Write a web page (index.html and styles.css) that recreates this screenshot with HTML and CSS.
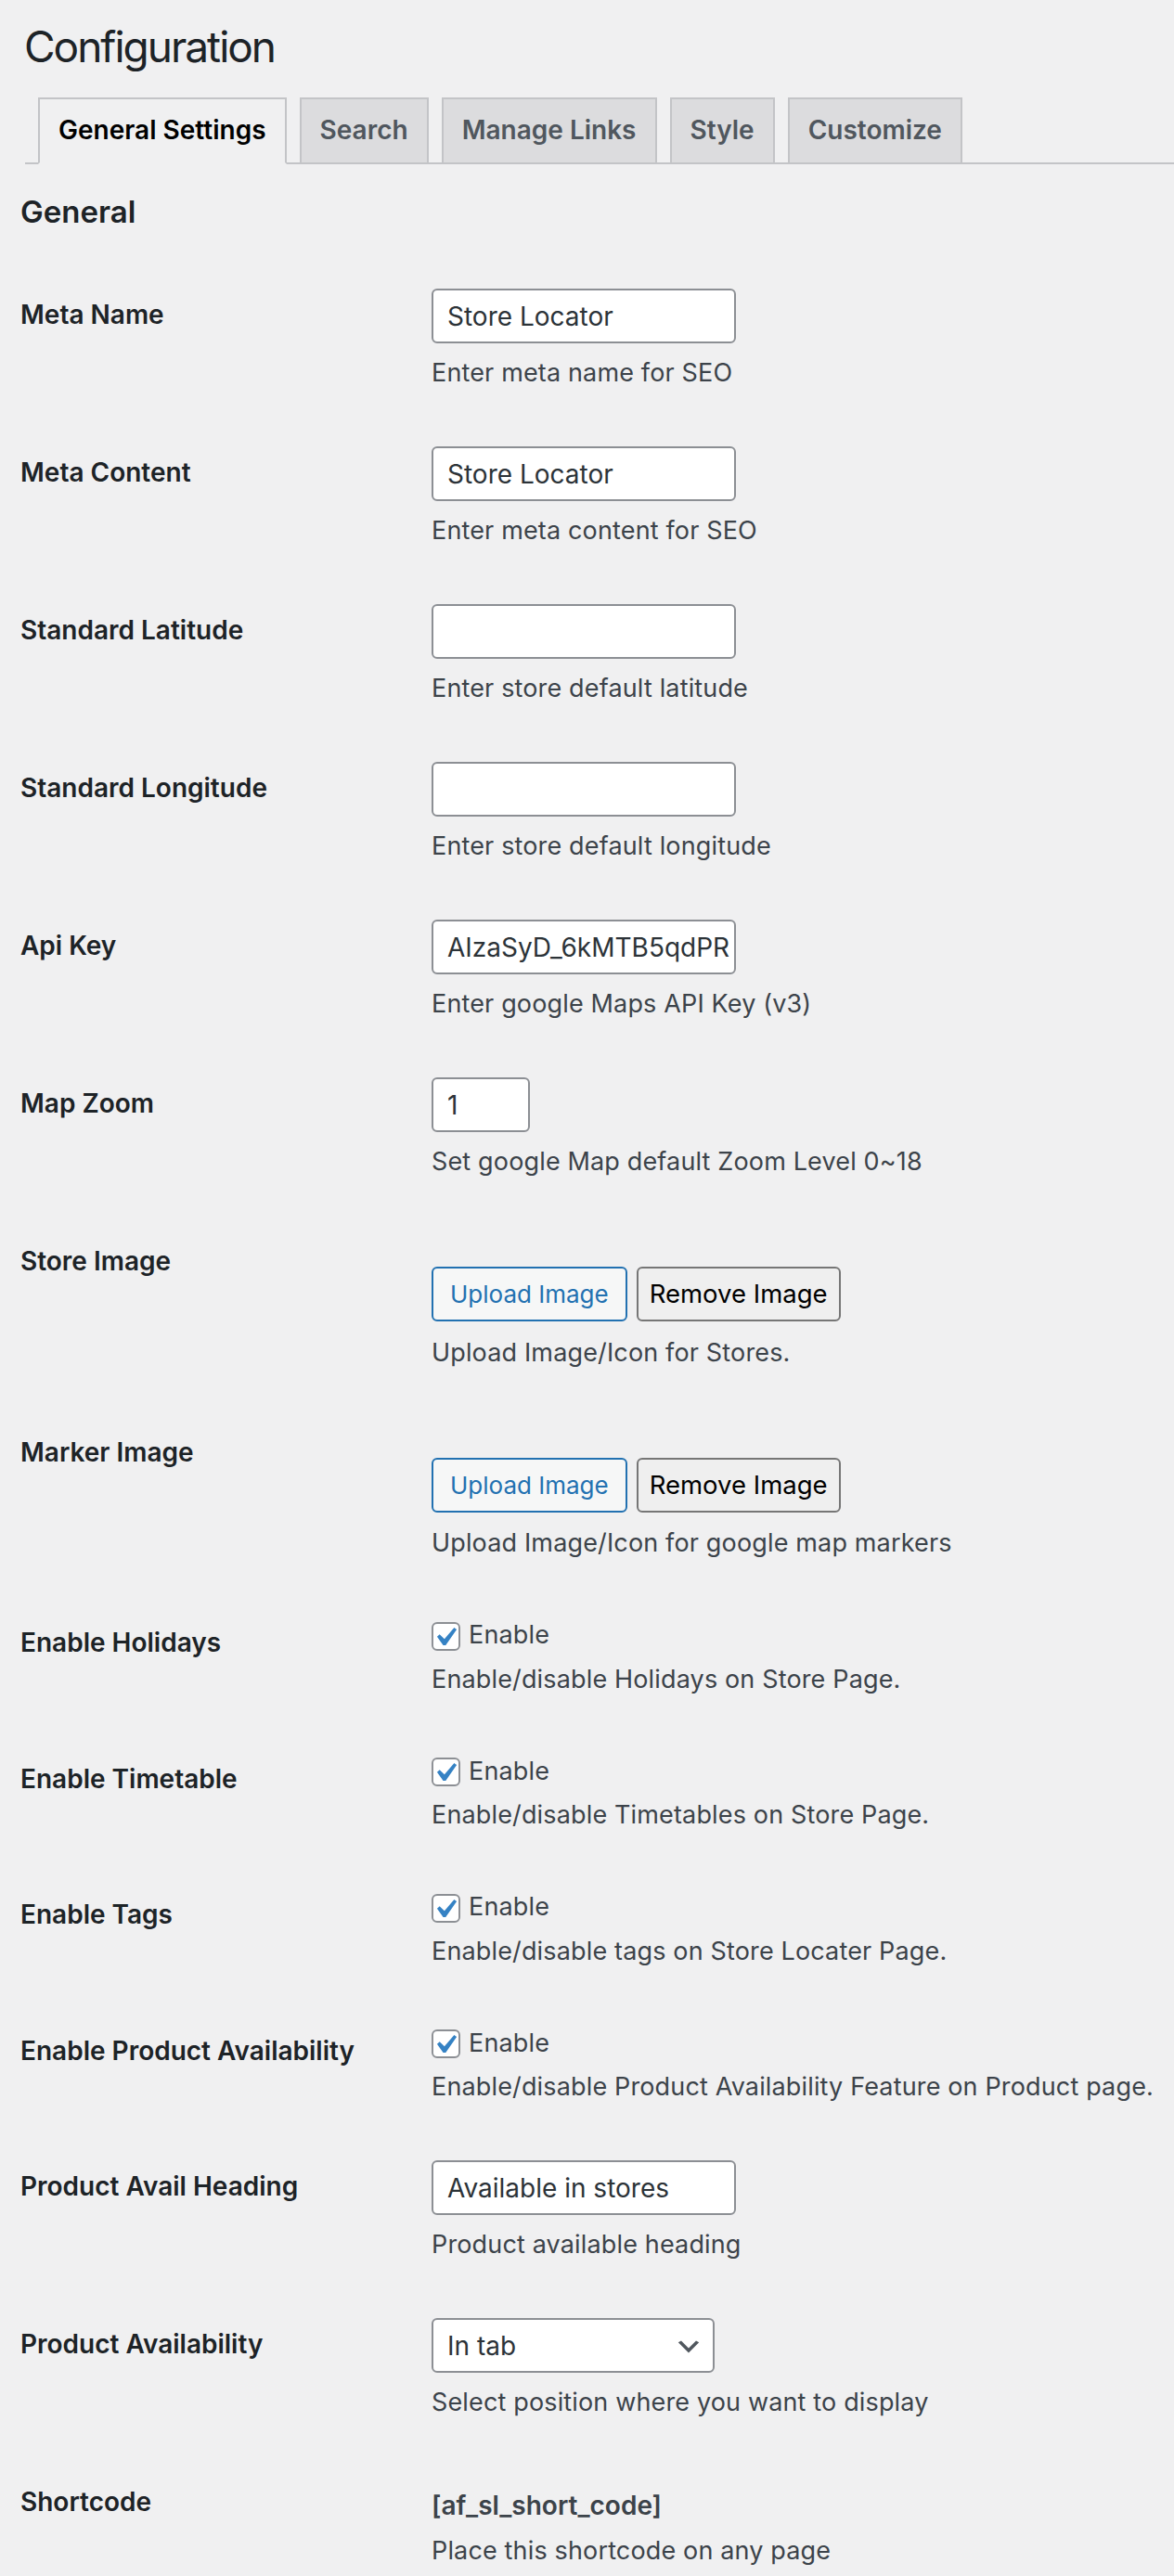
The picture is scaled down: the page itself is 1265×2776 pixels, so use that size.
FILE: index.html
```html
<!DOCTYPE html>
<html lang="en">
<head>
<meta charset="utf-8">
<title>Configuration</title>
<link rel="stylesheet" href="styles.css">
</head>
<body>
<div class="wrap">
  <h1 class="page-title">Configuration</h1>
  <nav class="tabs">
    <a class="tab tab-active">General Settings</a>
    <a class="tab">Search</a>
    <a class="tab">Manage Links</a>
    <a class="tab">Style</a>
    <a class="tab">Customize</a>
  </nav>
  <h2 class="section-title">General</h2>

  <div class="form">
    <div class="row">
      <div class="th">Meta Name</div>
      <div class="td">
        <input class="field" type="text" value="Store Locator">
        <p class="desc">Enter meta name for SEO</p>
      </div>
    </div>
    <div class="row">
      <div class="th">Meta Content</div>
      <div class="td">
        <input class="field" type="text" value="Store Locator">
        <p class="desc">Enter meta content for SEO</p>
      </div>
    </div>
    <div class="row">
      <div class="th">Standard Latitude</div>
      <div class="td">
        <input class="field" type="text" value="">
        <p class="desc">Enter store default latitude</p>
      </div>
    </div>
    <div class="row">
      <div class="th">Standard Longitude</div>
      <div class="td">
        <input class="field" type="text" value="">
        <p class="desc">Enter store default longitude</p>
      </div>
    </div>
    <div class="row">
      <div class="th">Api Key</div>
      <div class="td">
        <input class="field field-key" type="text" value="AIzaSyD_6kMTB5qdPR">
        <p class="desc">Enter google Maps API Key (v3)</p>
      </div>
    </div>
    <div class="row">
      <div class="th">Map Zoom</div>
      <div class="td">
        <input class="field field-small" type="text" value="1">
        <p class="desc">Set google Map default Zoom Level 0~18</p>
      </div>
    </div>
    <div class="row">
      <div class="th">Store Image</div>
      <div class="td">
        <div class="preview"></div>
        <div class="buttons">
          <span class="btn btn-upload">Upload Image</span>
          <span class="btn btn-remove">Remove Image</span>
        </div>
        <p class="desc desc-after-btn">Upload Image/Icon for Stores.</p>
      </div>
    </div>
    <div class="row">
      <div class="th">Marker Image</div>
      <div class="td">
        <div class="preview"></div>
        <div class="buttons">
          <span class="btn btn-upload">Upload Image</span>
          <span class="btn btn-remove">Remove Image</span>
        </div>
        <p class="desc desc-after-btn">Upload Image/Icon for google map markers</p>
      </div>
    </div>
    <div class="row">
      <div class="th">Enable Holidays</div>
      <div class="td">
        <div class="check-line">
          <svg class="checkbox" viewBox="0 0 16 16" width="31" height="31"><rect x="0.5" y="0.5" width="15" height="15" rx="2.6" fill="#fff" stroke="#8c8f94" stroke-width="1"/><path transform="translate(-3 -2) scale(1.05)" d="M14.83 4.89l1.34.94-5.81 8.38H9.02L5.78 9.67l1.34-1.25 2.57 2.4z" fill="#3582c4"/></svg>
          <span class="check-text">Enable</span>
        </div>
        <p class="desc desc-check">Enable/disable Holidays on Store Page.</p>
      </div>
    </div>
    <div class="row">
      <div class="th">Enable Timetable</div>
      <div class="td">
        <div class="check-line">
          <svg class="checkbox" viewBox="0 0 16 16" width="31" height="31"><rect x="0.5" y="0.5" width="15" height="15" rx="2.6" fill="#fff" stroke="#8c8f94" stroke-width="1"/><path transform="translate(-3 -2) scale(1.05)" d="M14.83 4.89l1.34.94-5.81 8.38H9.02L5.78 9.67l1.34-1.25 2.57 2.4z" fill="#3582c4"/></svg>
          <span class="check-text">Enable</span>
        </div>
        <p class="desc desc-check">Enable/disable Timetables on Store Page.</p>
      </div>
    </div>
    <div class="row">
      <div class="th">Enable Tags</div>
      <div class="td">
        <div class="check-line">
          <svg class="checkbox" viewBox="0 0 16 16" width="31" height="31"><rect x="0.5" y="0.5" width="15" height="15" rx="2.6" fill="#fff" stroke="#8c8f94" stroke-width="1"/><path transform="translate(-3 -2) scale(1.05)" d="M14.83 4.89l1.34.94-5.81 8.38H9.02L5.78 9.67l1.34-1.25 2.57 2.4z" fill="#3582c4"/></svg>
          <span class="check-text">Enable</span>
        </div>
        <p class="desc desc-check">Enable/disable tags on Store Locater Page.</p>
      </div>
    </div>
    <div class="row">
      <div class="th">Enable Product Availability</div>
      <div class="td">
        <div class="check-line">
          <svg class="checkbox" viewBox="0 0 16 16" width="31" height="31"><rect x="0.5" y="0.5" width="15" height="15" rx="2.6" fill="#fff" stroke="#8c8f94" stroke-width="1"/><path transform="translate(-3 -2) scale(1.05)" d="M14.83 4.89l1.34.94-5.81 8.38H9.02L5.78 9.67l1.34-1.25 2.57 2.4z" fill="#3582c4"/></svg>
          <span class="check-text">Enable</span>
        </div>
        <p class="desc desc-check">Enable/disable Product Availability Feature on Product page.</p>
      </div>
    </div>
    <div class="row">
      <div class="th">Product Avail Heading</div>
      <div class="td">
        <input class="field" type="text" value="Available in stores">
        <p class="desc">Product available heading</p>
      </div>
    </div>
    <div class="row">
      <div class="th">Product Availability</div>
      <div class="td">
        <div class="select">
          <span>In tab</span>
          <svg class="chevron" viewBox="0 0 20 20" width="32" height="32"><path d="M5 6l5 5 5-5 2 1-7 7-7-7 2-1z" fill="#50575e"/></svg>
        </div>
        <p class="desc">Select position where you want to display</p>
      </div>
    </div>
    <div class="row">
      <div class="th">Shortcode</div>
      <div class="td">
        <p class="shortcode">[af_sl_short_code]</p>
        <p class="desc desc-code">Place this shortcode on any page</p>
      </div>
    </div>
  </div>
</div>
</body>
</html>
```

FILE: styles.css
```css
* { box-sizing: border-box; }

html, body {
  margin: 0;
  padding: 0;
  background: #f0f0f1;
}

body {
  font-family: Inter, "Noto Sans", "Liberation Sans", sans-serif;
  color: #3c434a;
}

.wrap {
  padding-left: 22px;
  overflow: hidden;
}

.page-title {
  margin: 0 0 0 4px;
  padding-top: 19px;
  font-size: 46px;
  line-height: 62px;
  font-weight: 400;
  letter-spacing: -2px;
  color: #1d2327;
}

.tabs {
  display: flex;
  margin: 24px 0 0 5px;
  padding-left: 14px;
  border-bottom: 2px solid #c3c4c7;
}

.tab {
  display: block;
  height: 72px;
  margin-right: 14px;
  margin-bottom: -2px;
  padding: 0 20px;
  border: 2px solid #c3c4c7;
  background: #dcdcde;
  color: #50575e;
  font-size: 28px;
  font-weight: 600;
  line-height: 66px;
  white-space: nowrap;
}

.tab-active {
  background: #f0f0f1;
  border-bottom-color: #f0f0f1;
  color: #000;
}

.section-title {
  margin: 30px 0 0;
  font-size: 33px;
  line-height: 43px;
  font-weight: 600;
  color: #1d2327;
}

.form {
  margin-top: 31px;
}

.row {
  display: grid;
  grid-template-columns: 443px 1fr;
}

.th {
  padding-top: 40px;
  font-size: 28px;
  line-height: 36px;
  font-weight: 600;
  color: #1d2327;
}

.td {
  padding: 30px 0;
}

.field {
  display: block;
  width: 328px;
  height: 59px;
  margin: 0;
  padding: 0 15px;
  border: 2px solid #8c8f94;
  border-radius: 6px;
  background: #fff;
  font-family: inherit;
  font-size: 28px;
  color: #2c3338;
  outline: none;
}

.field-key {
  padding-right: 0;
}

.field-small {
  width: 106px;
}

.desc {
  margin: 12px 0 0;
  font-size: 27px;
  letter-spacing: 0.15px;
  line-height: 39px;
  color: #3c434a;
  white-space: nowrap;
}

.desc-check {
  margin-top: 8.5px;
}

.desc-after-btn {
  margin-top: 13.5px;
}

.desc-code {
  margin-top: 9px;
}

.preview {
  height: 34px;
}

.buttons {
  display: flex;
  gap: 10px;
}

.btn {
  display: block;
  height: 59px;
  border: 2px solid;
  border-radius: 6px;
  line-height: 55px;
  white-space: nowrap;
}

.btn-upload {
  padding: 0 18px;
  border-color: #2271b1;
  background: #f6f7f7;
  color: #2271b1;
  font-size: 26px;
}

.btn-remove {
  padding: 0 12px;
  border-color: #767676;
  background: #efefef;
  color: #000;
  font-size: 27.5px;
}

.check-line {
  display: flex;
  align-items: flex-start;
  height: 39px;
}

.checkbox {
  display: block;
  margin-top: 5.5px;
  overflow: visible;
}

.check-text {
  margin-left: 9px;
  font-size: 27px;
  letter-spacing: 0.15px;
  line-height: 39px;
  color: #3c434a;
}

.select {
  display: flex;
  align-items: center;
  justify-content: space-between;
  width: 305px;
  height: 59px;
  padding: 0 10px 0 15px;
  border: 2px solid #8c8f94;
  border-radius: 6px;
  background: #fff;
  font-size: 28px;
  color: #2c3338;
}

.chevron {
  display: block;
  margin-top: 2px;
}

.shortcode {
  margin: 13px 0 0;
  font-size: 28px;
  line-height: 39px;
  font-weight: 600;
  color: #3c434a;
}
```
